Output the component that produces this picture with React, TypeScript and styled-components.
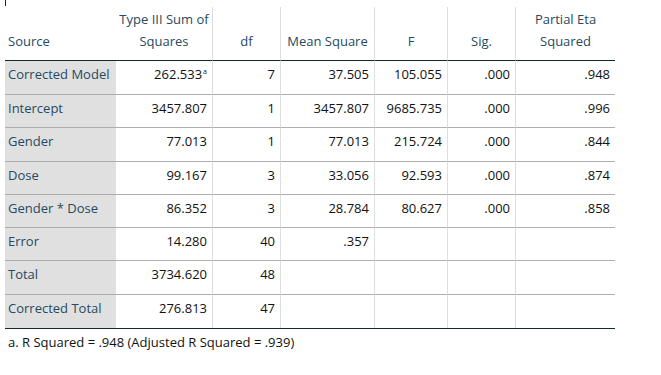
import React from 'react';
import styled, { createGlobalStyle } from 'styled-components';

const GlobalStyle = createGlobalStyle`
  html, body {
    margin: 0;
    padding: 0;
    background: #ffffff;
  }
  body {
    font-family: 'Open Sans', 'Noto Sans', sans-serif;
  }
`;

const Page = styled.div`
  width: 661px;
  height: 375px;
  padding: 0 5px;
  box-sizing: border-box;
  overflow: hidden;
`;

const Tick = styled.div`
  width: 1px;
  height: 6px;
  margin-bottom: 1px;
  background: #222;
`;

const Grid = styled.div`
  display: grid;
  grid-template-columns: 111px 97px 68px 94px 73px 68px 99px;
  width: 610px;
  border-bottom: 1px solid #152935;
`;

const HeadCell = styled.div<{ $align: 'left' | 'center'; $divider: boolean }>`
  height: 54px;
  box-sizing: border-box;
  display: flex;
  flex-direction: column;
  justify-content: flex-end;
  align-items: ${p => (p.$align === 'left' ? 'flex-start' : 'center')};
  text-align: ${p => p.$align};
  padding: 0 3px 8px;
  font-size: 13px;
  line-height: 22px;
  color: #264a60;
  border-bottom: 1px solid #152935;
  border-right: ${p => (p.$divider ? '1px solid #dedede' : '0')};
`;

const LabelCell = styled.div<{ $h: number; $last: boolean }>`
  height: ${p => p.$h}px;
  box-sizing: border-box;
  background: #e0e0e0;
  color: #264a60;
  font-size: 13px;
  line-height: 20px;
  padding: 3px 0 0 3px;
  white-space: nowrap;
  border-bottom: ${p => (p.$last ? '0' : '1px solid #aeaeae')};
`;

const DataCell = styled.div<{ $h: number; $last: boolean; $divider: boolean }>`
  height: ${p => p.$h}px;
  box-sizing: border-box;
  color: #111;
  font-size: 13px;
  line-height: 20px;
  padding: 3px 5px 0 0;
  text-align: right;
  white-space: nowrap;
  border-bottom: ${p => (p.$last ? '0' : '1px solid #aeaeae')};
  border-right: ${p => (p.$divider ? '1px solid #dedede' : '0')};
`;

const Sup = styled.sup`
  font-size: 7px;
  line-height: 0;
  vertical-align: 5px;
  margin-left: 1px;
`;

const Footnote = styled.div`
  margin: 3px 0 0 3px;
  font-size: 13px;
  line-height: 20px;
  color: #111;
`;

const headers: { label: React.ReactNode; align: 'left' | 'center' }[] = [
  { label: 'Source', align: 'left' },
  { label: <>Type III Sum of<br />Squares</>, align: 'center' },
  { label: 'df', align: 'center' },
  { label: 'Mean Square', align: 'center' },
  { label: 'F', align: 'center' },
  { label: 'Sig.', align: 'center' },
  { label: <>Partial Eta<br />Squared</>, align: 'center' },
];

type Row = { source: string; values: React.ReactNode[] };

const rows: Row[] = [
  { source: 'Corrected Model', values: [<>262.533<Sup>a</Sup></>, '7', '37.505', '105.055', '.000', '.948'] },
  { source: 'Intercept', values: ['3457.807', '1', '3457.807', '9685.735', '.000', '.996'] },
  { source: 'Gender', values: ['77.013', '1', '77.013', '215.724', '.000', '.844'] },
  { source: 'Dose', values: ['99.167', '3', '33.056', '92.593', '.000', '.874'] },
  { source: 'Gender * Dose', values: ['86.352', '3', '28.784', '80.627', '.000', '.858'] },
  { source: 'Error', values: ['14.280', '40', '.357', '', '', ''] },
  { source: 'Total', values: ['3734.620', '48', '', '', '', ''] },
  { source: 'Corrected Total', values: ['276.813', '47', '', '', '', ''] },
];

// row heights follow the grid lines of the original output
const rowHeights = [34, 33, 34, 33, 33, 33, 34, 33];

const App: React.FC = () => (
  <>
    <GlobalStyle />
    <Page>
      <Tick />
      <Grid>
        {headers.map((h, i) => (
          <HeadCell key={i} $align={h.align} $divider={i > 0 && i < headers.length - 1}>
            <span>{h.label}</span>
          </HeadCell>
        ))}
        {rows.map((row, r) => {
          const last = r === rows.length - 1;
          return (
            <React.Fragment key={row.source}>
              <LabelCell $h={rowHeights[r]} $last={last}>
                {row.source}
              </LabelCell>
              {row.values.map((v, c) => (
                <DataCell
                  key={c}
                  $h={rowHeights[r]}
                  $last={last}
                  $divider={c < row.values.length - 1}
                >
                  {v}
                </DataCell>
              ))}
            </React.Fragment>
          );
        })}
      </Grid>
      <Footnote>a. R Squared = .948 (Adjusted R Squared = .939)</Footnote>
    </Page>
  </>
);

export default App;
